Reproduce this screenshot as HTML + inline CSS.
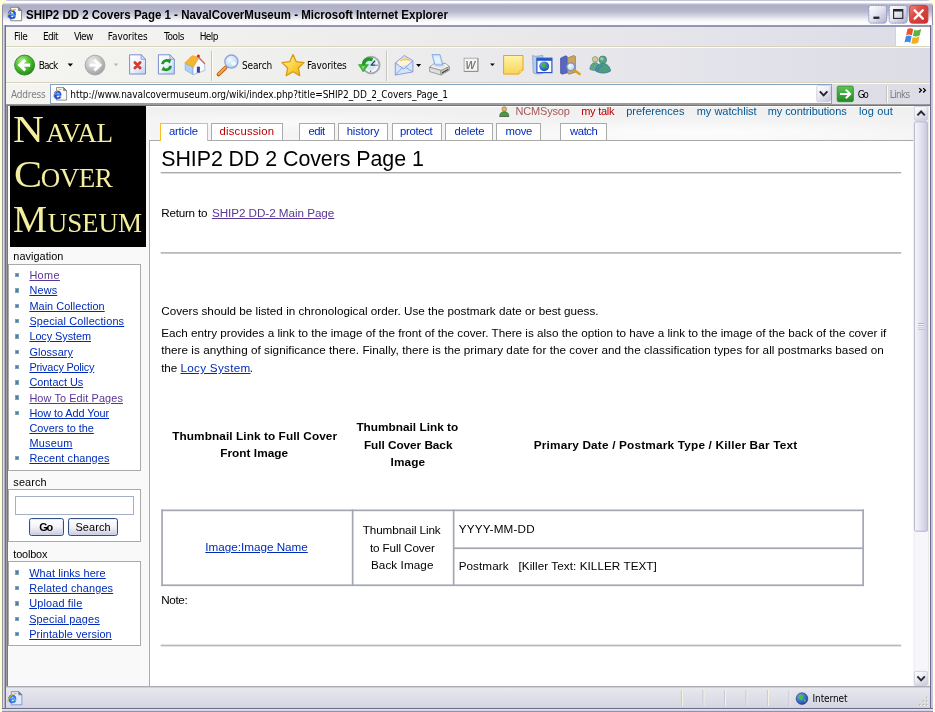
<!DOCTYPE html>
<html>
<head>
<meta charset="utf-8">
<title>SHIP2 DD 2 Covers Page 1 - NavalCoverMuseum</title>
<style>
*{box-sizing:border-box}
html,body{margin:0;padding:0}
body{width:935px;height:712px;overflow:hidden;position:relative;background:#ffffd8;font-family:"Liberation Sans",sans-serif;}
.abs{position:absolute}
.ui{font-family:"DejaVu Sans Condensed","DejaVu Sans","Liberation Sans",sans-serif;font-size:10px;color:#000;white-space:nowrap;line-height:12px}
/* window frame */
#frame{left:2px;top:0;width:931px;height:712px;border-radius:7px 7px 0 0;background:#c9c9e1;overflow:hidden}
#titlebar{left:0;top:0;width:931px;height:27px;background:linear-gradient(to bottom,#8f8fab 0,#fdfdff 1px,#fdfdff 2.5px,#b8b8ce 4.5px,#aeaec6 6px,#b6b6cd 11px,#cfcfde 15px,#ededf4 19px,#fcfcfe 22px,#fcfcfe 24.5px,#9a9ab6 25px,#9292b0 27px)}
#title{left:25px;top:7px;font-family:"Liberation Sans",sans-serif;font-weight:bold;font-size:11.7px;letter-spacing:-0.1px;line-height:14px;white-space:nowrap;color:#000}
.bl{left:0;top:25px;width:4px;height:684px;background:linear-gradient(to right,#8e8e94 0,#9a9aa4 0.9px,#dcdcee 1.2px,#d0d0e6 2.2px,#8a8aa6 2.8px,#70708c 3.1px,#70708c 4px)}
.br{left:928px;top:25px;width:3.5px;height:684px;background:linear-gradient(to right,#6c6c8a 0,#6c6c8a 0.9px,#c2c2e2 1.2px,#c8c8e6 2.6px,#9a9ab6 3.5px)}
.bb{left:0;top:708px;width:931px;height:4px;background:linear-gradient(to bottom,#6c6c8a 0,#6c6c8a 0.9px,#e6e6f4 1.2px,#d2d2e8 2.7px,#96969c 3.1px,#909096 4px)}
.tbtn{top:5px;width:18.5px;height:18.5px;border-radius:3px;border:1px solid #7c86c4;background:linear-gradient(135deg,#ffffff 0,#e9e9f3 35%,#b9b9d3 100%)}
/* bars */
#menubar{left:6px;top:27px;width:924px;height:20px;background:linear-gradient(to right,#f4f4f0 0,#f1f1ee 20%,#eaeaec 52%,#e2e2ea 80%,#dcdce6 100%);border-bottom:1px solid #d9d4c0}
#toolbar{left:6px;top:47px;width:924px;height:36px;background:linear-gradient(to right,#f4f4f0 0,#f1f1ee 20%,#eaeaec 52%,#e2e2ea 80%,#dcdce6 100%);border-top:1px solid #fbfbf8;border-bottom:1px solid #d9d4c0}
#addrbar{left:6px;top:83px;width:924px;height:21px;background:linear-gradient(to right,#f4f4f0 0,#f1f1ee 20%,#eaeaec 52%,#e2e2ea 80%,#dcdce6 100%);border-top:1px solid #fbfbf8}
.sep{width:1px;background:#c5c5bd;border-right:1px solid #fafaf6;box-sizing:content-box}
#status{left:6px;top:686px;width:924px;height:22px;background:linear-gradient(to bottom,#a2a2aa 0,#b4b4bc 1px,#d4d4dc 1.6px,#e9e9f0 2.6px,#e4e4ec 5px,#dedee8 13px,#d8d8e3 20px,#d2d2de 22px)}
/* page */
#view{left:6px;top:104px;width:924px;height:582px;background:#9b9b9b}
#view:before{content:"";position:absolute;left:1px;top:1px;right:0;bottom:0;background:#787870}
#page{left:2px;top:2px;width:906px;height:580px;background:#f9f9f9;overflow:hidden}
</style>
</head>
<body>
<div id="root" class="abs" style="left:0;top:0;width:935px;height:712px;will-change:transform">
<div id="frame" class="abs">
  <div id="titlebar" class="abs"></div>
  <div class="abs" style="left:0;top:5px;width:1px;height:21px;background:#8e8ea6"></div><div class="abs" style="left:930px;top:5px;width:1px;height:21px;background:#8e8ea6"></div><div class="abs bl"></div><div class="abs br"></div><div class="abs bb"></div>
  
</div>

<!-- MENUBAR -->
<div id="menubar" class="abs">
  <div class="abs" style="left:889px;top:0;width:35px;height:19px;background:#fff;border-left:1px solid #d9d4c0"></div>
</div>

<!-- TOOLBAR -->
<div id="toolbar" class="abs">
  <div class="abs sep" style="left:205px;top:3px;height:30px"></div>
  <div class="abs sep" style="left:380px;top:3px;height:30px"></div>
</div>

<!-- ADDRESS BAR -->
<div id="addrbar" class="abs">
  <div class="abs" style="left:44px;top:0;width:782px;height:20px;background:#fff;border:1px solid #86a0c2"></div>
  <div class="abs sep" style="left:880px;top:2px;height:17px"></div>
</div>

<!-- PAGE VIEW -->
<div id="view" class="abs">
  <div id="page" class="abs">
<div class="abs" style="left:0.00px;top:0.00px;width:906.00px;height:40.00px;background:radial-gradient(ellipse 260px 14px at 76% 66%,rgba(255,255,255,0.85),rgba(255,255,255,0) 100%),radial-gradient(ellipse 200px 12px at 30% 40%,rgba(255,255,255,0.6),rgba(255,255,255,0) 100%),linear-gradient(to bottom,#ffffff 0,#ffffff 1px,#f0f0f0 1.2px,#f2f2f2 40%,#f6f6f6 100%)"></div>
<div class="abs" style="left:2.00px;top:0.00px;width:136.00px;height:141.00px;background:#000"></div>
<span class="abs" style="left:4.88px;top:0px;font-family:'Liberation Serif',serif;font-size:27px;line-height:47px;letter-spacing:-0.312px;color:#f3eea0;white-space:pre"><span style="display:inline-block;width:33.02px;font-size:38px;letter-spacing:0;transform:scaleX(1.1231);transform-origin:0 0">N</span>AVAL</span>
<span class="abs" style="left:5.59px;top:45px;font-family:'Liberation Serif',serif;font-size:27px;line-height:47px;letter-spacing:-0.463px;color:#f3eea0;white-space:pre"><span style="display:inline-block;width:27.11px;font-size:38px;letter-spacing:0;transform:scaleX(1.1087);transform-origin:0 0">C</span>OVER</span>
<span class="abs" style="left:4.99px;top:90px;font-family:'Liberation Serif',serif;font-size:27px;line-height:47px;letter-spacing:-0.051px;color:#f3eea0;white-space:pre"><span style="display:inline-block;width:34.71px;font-size:38px;letter-spacing:0;transform:scaleX(1.0063);transform-origin:0 0">M</span>USEUM</span>
<span class="abs" style="left:5.30px;top:143.00px;font-family:'Liberation Sans',sans-serif;font-size:10.9px;line-height:14px;color:#000;letter-spacing:0.045px;white-space:pre;">navigation</span>
<div class="abs" style="left:0.30px;top:157.70px;width:133.00px;height:207.00px;background:#fff;border:1px solid #aaa"></div>
<a class="abs" style="left:21.40px;top:162.00px;font-family:'Liberation Sans',sans-serif;font-size:10.9px;line-height:14px;color:#5a3696;letter-spacing:0.369px;white-space:pre;text-decoration:underline;">Home</a>
<div class="abs" style="left:7.00px;top:166.80px;width:4.40px;height:4.60px;background:#4f7f9d;border:0.7px solid #7ea3ba"></div>
<a class="abs" style="left:21.40px;top:177.00px;font-family:'Liberation Sans',sans-serif;font-size:10.9px;line-height:14px;color:#002bb8;letter-spacing:0.171px;white-space:pre;text-decoration:underline;">News</a>
<div class="abs" style="left:7.00px;top:182.30px;width:4.40px;height:4.60px;background:#4f7f9d;border:0.7px solid #7ea3ba"></div>
<a class="abs" style="left:21.40px;top:193.00px;font-family:'Liberation Sans',sans-serif;font-size:10.9px;line-height:14px;color:#002bb8;letter-spacing:0.057px;white-space:pre;text-decoration:underline;">Main Collection</a>
<div class="abs" style="left:7.00px;top:197.60px;width:4.40px;height:4.60px;background:#4f7f9d;border:0.7px solid #7ea3ba"></div>
<a class="abs" style="left:21.40px;top:208.00px;font-family:'Liberation Sans',sans-serif;font-size:10.9px;line-height:14px;color:#002bb8;letter-spacing:0.146px;white-space:pre;text-decoration:underline;">Special Collections</a>
<div class="abs" style="left:7.00px;top:212.80px;width:4.40px;height:4.60px;background:#4f7f9d;border:0.7px solid #7ea3ba"></div>
<a class="abs" style="left:21.40px;top:223.00px;font-family:'Liberation Sans',sans-serif;font-size:10.9px;line-height:14px;color:#002bb8;letter-spacing:-0.067px;white-space:pre;text-decoration:underline;">Locy System</a>
<div class="abs" style="left:7.00px;top:228.10px;width:4.40px;height:4.60px;background:#4f7f9d;border:0.7px solid #7ea3ba"></div>
<a class="abs" style="left:21.40px;top:239.00px;font-family:'Liberation Sans',sans-serif;font-size:10.9px;line-height:14px;color:#002bb8;letter-spacing:0.083px;white-space:pre;text-decoration:underline;">Glossary</a>
<div class="abs" style="left:7.00px;top:243.60px;width:4.40px;height:4.60px;background:#4f7f9d;border:0.7px solid #7ea3ba"></div>
<a class="abs" style="left:21.40px;top:254.00px;font-family:'Liberation Sans',sans-serif;font-size:10.9px;line-height:14px;color:#002bb8;letter-spacing:-0.210px;white-space:pre;text-decoration:underline;">Privacy Policy</a>
<div class="abs" style="left:7.00px;top:258.60px;width:4.40px;height:4.60px;background:#4f7f9d;border:0.7px solid #7ea3ba"></div>
<a class="abs" style="left:21.40px;top:269.00px;font-family:'Liberation Sans',sans-serif;font-size:10.9px;line-height:14px;color:#002bb8;letter-spacing:-0.003px;white-space:pre;text-decoration:underline;">Contact Us</a>
<div class="abs" style="left:7.00px;top:274.00px;width:4.40px;height:4.60px;background:#4f7f9d;border:0.7px solid #7ea3ba"></div>
<a class="abs" style="left:21.40px;top:285.00px;font-family:'Liberation Sans',sans-serif;font-size:10.9px;line-height:14px;color:#5a3696;letter-spacing:0.102px;white-space:pre;text-decoration:underline;">How To Edit Pages</a>
<div class="abs" style="left:7.00px;top:289.30px;width:4.40px;height:4.60px;background:#4f7f9d;border:0.7px solid #7ea3ba"></div>
<a class="abs" style="left:21.40px;top:300.00px;font-family:'Liberation Sans',sans-serif;font-size:10.9px;line-height:14px;color:#002bb8;letter-spacing:-0.057px;white-space:pre;text-decoration:underline;">How to Add Your</a>
<div class="abs" style="left:7.00px;top:304.80px;width:4.40px;height:4.60px;background:#4f7f9d;border:0.7px solid #7ea3ba"></div>
<a class="abs" style="left:21.40px;top:315.00px;font-family:'Liberation Sans',sans-serif;font-size:10.9px;line-height:14px;color:#002bb8;letter-spacing:-0.026px;white-space:pre;text-decoration:underline;">Covers to the</a>
<a class="abs" style="left:21.40px;top:330.00px;font-family:'Liberation Sans',sans-serif;font-size:10.9px;line-height:14px;color:#002bb8;letter-spacing:0.222px;white-space:pre;text-decoration:underline;">Museum</a>
<a class="abs" style="left:21.40px;top:345.00px;font-family:'Liberation Sans',sans-serif;font-size:10.9px;line-height:14px;color:#002bb8;letter-spacing:0.095px;white-space:pre;text-decoration:underline;">Recent changes</a>
<div class="abs" style="left:7.00px;top:349.90px;width:4.40px;height:4.60px;background:#4f7f9d;border:0.7px solid #7ea3ba"></div>
<span class="abs" style="left:5.30px;top:369.00px;font-family:'Liberation Sans',sans-serif;font-size:10.9px;line-height:14px;color:#000;letter-spacing:0.134px;white-space:pre;">search</span>
<div class="abs" style="left:0.30px;top:383.40px;width:133.00px;height:52.50px;background:#fff;border:1px solid #aaa"></div>
<div class="abs" style="left:7.00px;top:390.00px;width:119.00px;height:19.20px;background:#fff;border:1px solid #a3b0c2"></div>
<div class="abs" style="left:21.00px;top:412.20px;width:34.60px;height:17.60px;border:1px solid #2f4f86;border-radius:2.5px;background:linear-gradient(to bottom,#ffffff 0,#f5f5f9 45%,#dcdce8 80%,#c6c6da 100%);box-shadow:inset 0 0 0 0.6px #cfdcf4"></div>
<div class="abs" style="left:60.00px;top:412.20px;width:50.20px;height:17.60px;border:1px solid #2f4f86;border-radius:2.5px;background:linear-gradient(to bottom,#ffffff 0,#f5f5f9 45%,#dcdce8 80%,#c6c6da 100%);box-shadow:inset 0 0 0 0.6px #cfdcf4"></div>
<span class="abs" style="left:31.20px;top:414.00px;font-family:'Liberation Sans',sans-serif;font-size:10.9px;line-height:14px;color:#000;letter-spacing:-1.171px;white-space:pre;font-weight:bold;">Go</span>
<span class="abs" style="left:67.40px;top:414.00px;font-family:'Liberation Sans',sans-serif;font-size:10.9px;line-height:14px;color:#000;letter-spacing:0.130px;white-space:pre;">Search</span>
<span class="abs" style="left:5.30px;top:441.00px;font-family:'Liberation Sans',sans-serif;font-size:10.9px;line-height:14px;color:#000;letter-spacing:-0.162px;white-space:pre;">toolbox</span>
<div class="abs" style="left:0.30px;top:455.40px;width:133.00px;height:84.30px;background:#fff;border:1px solid #aaa"></div>
<a class="abs" style="left:21.20px;top:460.00px;font-family:'Liberation Sans',sans-serif;font-size:10.9px;line-height:14px;color:#002bb8;letter-spacing:0.100px;white-space:pre;text-decoration:underline;">What links here</a>
<div class="abs" style="left:7.00px;top:464.40px;width:4.40px;height:4.60px;background:#4f7f9d;border:0.7px solid #7ea3ba"></div>
<a class="abs" style="left:21.20px;top:475.00px;font-family:'Liberation Sans',sans-serif;font-size:10.9px;line-height:14px;color:#002bb8;letter-spacing:0.151px;white-space:pre;text-decoration:underline;">Related changes</a>
<div class="abs" style="left:7.00px;top:479.80px;width:4.40px;height:4.60px;background:#4f7f9d;border:0.7px solid #7ea3ba"></div>
<a class="abs" style="left:21.20px;top:490.00px;font-family:'Liberation Sans',sans-serif;font-size:10.9px;line-height:14px;color:#002bb8;letter-spacing:0.160px;white-space:pre;text-decoration:underline;">Upload file</a>
<div class="abs" style="left:7.00px;top:495.20px;width:4.40px;height:4.60px;background:#4f7f9d;border:0.7px solid #7ea3ba"></div>
<a class="abs" style="left:21.20px;top:506.00px;font-family:'Liberation Sans',sans-serif;font-size:10.9px;line-height:14px;color:#002bb8;letter-spacing:0.169px;white-space:pre;text-decoration:underline;">Special pages</a>
<div class="abs" style="left:7.00px;top:510.50px;width:4.40px;height:4.60px;background:#4f7f9d;border:0.7px solid #7ea3ba"></div>
<a class="abs" style="left:21.20px;top:521.00px;font-family:'Liberation Sans',sans-serif;font-size:10.9px;line-height:14px;color:#002bb8;letter-spacing:0.084px;white-space:pre;text-decoration:underline;">Printable version</a>
<div class="abs" style="left:7.00px;top:525.80px;width:4.40px;height:4.60px;background:#4f7f9d;border:0.7px solid #7ea3ba"></div>
<div class="abs" style="left:140.50px;top:34.00px;width:770.00px;height:560.00px;background:#fff;border:1px solid #aaa"></div>
<svg class="abs" style="left:491.40px;top:-0.50px" width="10.5" height="11.5" viewBox="0 0 21 23"><circle cx="10.5" cy="6" r="4.6" fill="#e8b868" stroke="#8a6a30" stroke-width="1.2"/><path d="M1.5 21 C1.5 13 6 11.5 10.5 11.5 S19.5 13 19.5 21 Z" fill="#4f9a3f" stroke="#2f6a2a" stroke-width="1.4"/><path d="M1 21.5h19" stroke="#555" stroke-width="1.6"/></svg>
<span class="abs" style="left:507.50px;top:-2.00px;font-family:'Liberation Sans',sans-serif;font-size:11px;line-height:14px;color:#a55858;letter-spacing:-0.186px;white-space:pre;">NCMSysop</span>
<span class="abs" style="left:573.20px;top:-2.00px;font-family:'Liberation Sans',sans-serif;font-size:11px;line-height:14px;color:#ba0000;letter-spacing:-0.256px;white-space:pre;">my talk</span>
<span class="abs" style="left:618.20px;top:-2.00px;font-family:'Liberation Sans',sans-serif;font-size:11px;line-height:14px;color:#005896;letter-spacing:0.011px;white-space:pre;">preferences</span>
<span class="abs" style="left:688.70px;top:-2.00px;font-family:'Liberation Sans',sans-serif;font-size:11px;line-height:14px;color:#005896;letter-spacing:0.005px;white-space:pre;">my watchlist</span>
<span class="abs" style="left:759.70px;top:-2.00px;font-family:'Liberation Sans',sans-serif;font-size:11px;line-height:14px;color:#005896;letter-spacing:-0.073px;white-space:pre;">my contributions</span>
<span class="abs" style="left:851.00px;top:-2.00px;font-family:'Liberation Sans',sans-serif;font-size:11px;line-height:14px;color:#005896;letter-spacing:0.122px;white-space:pre;">log out</span>
<div class="abs" style="left:151.70px;top:17.10px;width:48.30px;height:18.20px;background:#fff;border:1px solid #fabd23;border-bottom:none"></div>
<span class="abs" style="left:160.90px;top:18.00px;font-family:'Liberation Sans',sans-serif;font-size:11.3px;line-height:15px;color:#002bb8;letter-spacing:-0.159px;white-space:pre;">article</span>
<div class="abs" style="left:202.60px;top:17.40px;width:72.30px;height:16.80px;background:#fff;border:1px solid #aaa;border-bottom:none"></div>
<span class="abs" style="left:211.60px;top:18.00px;font-family:'Liberation Sans',sans-serif;font-size:11.3px;line-height:15px;color:#ba0000;letter-spacing:0.182px;white-space:pre;">discussion</span>
<div class="abs" style="left:291.40px;top:17.40px;width:35.20px;height:16.80px;background:#fff;border:1px solid #aaa;border-bottom:none"></div>
<span class="abs" style="left:300.60px;top:18.00px;font-family:'Liberation Sans',sans-serif;font-size:11.3px;line-height:15px;color:#002bb8;letter-spacing:-0.525px;white-space:pre;">edit</span>
<div class="abs" style="left:330.00px;top:17.40px;width:50.40px;height:16.80px;background:#fff;border:1px solid #aaa;border-bottom:none"></div>
<span class="abs" style="left:338.70px;top:18.00px;font-family:'Liberation Sans',sans-serif;font-size:11.3px;line-height:15px;color:#002bb8;letter-spacing:-0.104px;white-space:pre;">history</span>
<div class="abs" style="left:383.90px;top:17.40px;width:49.80px;height:16.80px;background:#fff;border:1px solid #aaa;border-bottom:none"></div>
<span class="abs" style="left:392.00px;top:18.00px;font-family:'Liberation Sans',sans-serif;font-size:11.3px;line-height:15px;color:#002bb8;letter-spacing:-0.300px;white-space:pre;">protect</span>
<div class="abs" style="left:436.90px;top:17.40px;width:48.10px;height:16.80px;background:#fff;border:1px solid #aaa;border-bottom:none"></div>
<span class="abs" style="left:446.50px;top:18.00px;font-family:'Liberation Sans',sans-serif;font-size:11.3px;line-height:15px;color:#002bb8;letter-spacing:-0.139px;white-space:pre;">delete</span>
<div class="abs" style="left:488.20px;top:17.40px;width:44.60px;height:16.80px;background:#fff;border:1px solid #aaa;border-bottom:none"></div>
<span class="abs" style="left:497.50px;top:18.00px;font-family:'Liberation Sans',sans-serif;font-size:11.3px;line-height:15px;color:#002bb8;letter-spacing:-0.247px;white-space:pre;">move</span>
<div class="abs" style="left:552.40px;top:17.40px;width:46.20px;height:16.80px;background:#fff;border:1px solid #aaa;border-bottom:none"></div>
<span class="abs" style="left:562.00px;top:18.00px;font-family:'Liberation Sans',sans-serif;font-size:11.3px;line-height:15px;color:#002bb8;letter-spacing:-0.407px;white-space:pre;">watch</span>
<span class="abs" style="left:153.20px;top:40.00px;font-family:'Liberation Sans',sans-serif;font-size:21.4px;line-height:27px;color:#000;letter-spacing:-0.058px;white-space:pre;">SHIP2 DD 2 Covers Page 1</span>
<svg class="abs" style="left:0;top:0" width="906" height="580" fill="#aaaaaa"><rect x="152.70" y="66.00" width="740.50" height="1.40"/></svg>
<span class="abs" style="left:153.20px;top:99.00px;font-family:'Liberation Sans',sans-serif;font-size:11.7px;line-height:15px;color:#000;letter-spacing:-0.234px;white-space:pre;">Return to</span>
<a class="abs" style="left:203.90px;top:99.00px;font-family:'Liberation Sans',sans-serif;font-size:11.7px;line-height:15px;color:#5a3696;letter-spacing:-0.054px;white-space:pre;text-decoration:underline;">SHIP2 DD-2 Main Page</a>
<svg class="abs" style="left:0;top:0" width="906" height="580" fill="#bcbaba"><rect x="152.70" y="146.00" width="740.50" height="1.80"/></svg>
<span class="abs" style="left:153.20px;top:197.00px;font-family:'Liberation Sans',sans-serif;font-size:11.7px;line-height:15px;color:#000;letter-spacing:0.009px;white-space:pre;">Covers should be listed in chronological order. Use the postmark date or best guess.</span>
<span class="abs" style="left:153.20px;top:219.00px;font-family:'Liberation Sans',sans-serif;font-size:11.7px;line-height:15px;color:#000;letter-spacing:-0.002px;white-space:pre;">Each entry provides a link to the image of the front of the cover. There is also the option to have a link to the image of the back of the cover if</span>
<span class="abs" style="left:153.20px;top:236.00px;font-family:'Liberation Sans',sans-serif;font-size:11.7px;line-height:15px;color:#000;letter-spacing:0.043px;white-space:pre;">there is anything of significance there. Finally, there is the primary date for the cover and the classification types for all postmarks based on</span>
<span class="abs" style="left:153.20px;top:254.00px;font-family:'Liberation Sans',sans-serif;font-size:11.7px;line-height:15px;color:#000;letter-spacing:-0.074px;white-space:pre;">the</span>
<a class="abs" style="left:172.50px;top:254.00px;font-family:'Liberation Sans',sans-serif;font-size:11.7px;line-height:15px;color:#002bb8;letter-spacing:0.284px;white-space:pre;text-decoration:underline;">Locy System</a>
<span class="abs" style="left:241.70px;top:254.00px;font-family:'Liberation Sans',sans-serif;font-size:11.7px;line-height:15px;color:#000;white-space:pre;">.</span>
<span class="abs" style="left:164.20px;top:323.00px;font-family:'Liberation Sans',sans-serif;font-size:11.8px;line-height:15px;color:#000;letter-spacing:0.087px;white-space:pre;font-weight:bold;">Thumbnail Link to Full Cover</span>
<span class="abs" style="left:212.20px;top:340.00px;font-family:'Liberation Sans',sans-serif;font-size:11.8px;line-height:15px;color:#000;letter-spacing:0.045px;white-space:pre;font-weight:bold;">Front Image</span>
<span class="abs" style="left:348.40px;top:314.00px;font-family:'Liberation Sans',sans-serif;font-size:11.8px;line-height:15px;color:#000;letter-spacing:0.014px;white-space:pre;font-weight:bold;">Thumbnail Link to</span>
<span class="abs" style="left:355.90px;top:332.00px;font-family:'Liberation Sans',sans-serif;font-size:11.8px;line-height:15px;color:#000;letter-spacing:-0.043px;white-space:pre;font-weight:bold;">Full Cover Back</span>
<span class="abs" style="left:382.60px;top:349.00px;font-family:'Liberation Sans',sans-serif;font-size:11.8px;line-height:15px;color:#000;letter-spacing:0.092px;white-space:pre;font-weight:bold;">Image</span>
<span class="abs" style="left:525.70px;top:332.00px;font-family:'Liberation Sans',sans-serif;font-size:11.8px;line-height:15px;color:#000;letter-spacing:0.184px;white-space:pre;font-weight:bold;">Primary Date / Postmark Type / Killer Bar Text</span>
<div class="abs" style="left:153.20px;top:403.50px;width:702.60px;height:76.50px;background:#fff"></div>
<svg class="abs" style="left:0;top:0" width="906" height="580" fill="#a3a7b3"><rect x="153.20" y="403.50" width="702.80" height="1.70"/><rect x="153.20" y="478.40" width="702.80" height="1.70"/><rect x="153.20" y="403.50" width="1.70" height="76.60"/><rect x="854.30" y="403.50" width="1.70" height="76.60"/><rect x="343.80" y="403.50" width="1.70" height="76.50"/><rect x="444.80" y="403.50" width="1.70" height="76.50"/><rect x="445.00" y="441.40" width="410.00" height="1.70"/></svg>
<a class="abs" style="left:197.30px;top:433.00px;font-family:'Liberation Sans',sans-serif;font-size:11.7px;line-height:15px;color:#002bb8;letter-spacing:-0.009px;white-space:pre;text-decoration:underline;">Image:Image Name</a>
<span class="abs" style="left:354.80px;top:416.00px;font-family:'Liberation Sans',sans-serif;font-size:11.7px;line-height:15px;color:#000;letter-spacing:-0.109px;white-space:pre;">Thumbnail Link</span>
<span class="abs" style="left:361.90px;top:434.00px;font-family:'Liberation Sans',sans-serif;font-size:11.7px;line-height:15px;color:#000;letter-spacing:-0.105px;white-space:pre;">to Full Cover</span>
<span class="abs" style="left:363.00px;top:451.00px;font-family:'Liberation Sans',sans-serif;font-size:11.7px;line-height:15px;color:#000;letter-spacing:0.076px;white-space:pre;">Back Image</span>
<span class="abs" style="left:450.70px;top:415.00px;font-family:'Liberation Sans',sans-serif;font-size:11.7px;line-height:15px;color:#000;letter-spacing:0.188px;white-space:pre;">YYYY-MM-DD</span>
<span class="abs" style="left:450.70px;top:452.00px;font-family:'Liberation Sans',sans-serif;font-size:11.7px;line-height:15px;color:#000;letter-spacing:0.067px;white-space:pre;">Postmark   [Killer Text: KILLER TEXT]</span>
<span class="abs" style="left:153.20px;top:486.00px;font-family:'Liberation Sans',sans-serif;font-size:11.7px;line-height:15px;color:#000;letter-spacing:-0.347px;white-space:pre;">Note:</span>
<svg class="abs" style="left:0;top:0" width="906" height="580" fill="#bcbaba"><rect x="152.70" y="538.60" width="740.50" height="1.80"/></svg>
  </div>
</div>

<!-- STATUS BAR -->
<div id="status" class="abs">
</div>
<svg class="abs" style="left:0;top:0" width="935" height="712" viewBox="0 0 935 712"><defs>
<radialGradient id="gGreen" cx="0.38" cy="0.3" r="0.75"><stop offset="0" stop-color="#b4f08c"/><stop offset="0.45" stop-color="#56c238"/><stop offset="1" stop-color="#1f8517"/></radialGradient>
<radialGradient id="gGray" cx="0.38" cy="0.3" r="0.75"><stop offset="0" stop-color="#ececec"/><stop offset="0.5" stop-color="#c6c6c6"/><stop offset="1" stop-color="#9c9c9c"/></radialGradient>
<linearGradient id="gPage" x1="0" y1="0" x2="1" y2="1"><stop offset="0" stop-color="#ffffff"/><stop offset="0.5" stop-color="#eef4fd"/><stop offset="1" stop-color="#b9d2f4"/></linearGradient>
<radialGradient id="gLens" cx="0.4" cy="0.35" r="0.7"><stop offset="0" stop-color="#f4fbff"/><stop offset="0.6" stop-color="#c4e4fb"/><stop offset="1" stop-color="#9ccdf4"/></radialGradient>
<linearGradient id="gStar" x1="0" y1="0" x2="1" y2="1"><stop offset="0" stop-color="#fff6b0"/><stop offset="0.5" stop-color="#fbd545"/><stop offset="1" stop-color="#f0a818"/></linearGradient>
<linearGradient id="gNote" x1="0" y1="0" x2="0" y2="1"><stop offset="0" stop-color="#fff4a8"/><stop offset="1" stop-color="#f7d558"/></linearGradient>
<linearGradient id="gBtn" x1="0" y1="0" x2="1" y2="1"><stop offset="0" stop-color="#ffffff"/><stop offset="0.45" stop-color="#e6e6f1"/><stop offset="1" stop-color="#aeaecc"/></linearGradient>
<linearGradient id="gClose" x1="0" y1="0" x2="1" y2="1"><stop offset="0" stop-color="#ee8a7a"/><stop offset="0.4" stop-color="#da4a42"/><stop offset="1" stop-color="#c62e2e"/></linearGradient>
<linearGradient id="gGo" x1="0" y1="0" x2="0" y2="1"><stop offset="0" stop-color="#5fc456"/><stop offset="1" stop-color="#1e8a22"/></linearGradient>
<linearGradient id="gSb" x1="0" y1="0" x2="1" y2="0"><stop offset="0" stop-color="#f6f6fb"/><stop offset="0.5" stop-color="#e2e2ee"/><stop offset="1" stop-color="#c6c6dc"/></linearGradient>
<linearGradient id="gSbBtn" x1="0" y1="0" x2="0.6" y2="1"><stop offset="0" stop-color="#ffffff"/><stop offset="0.5" stop-color="#ededf5"/><stop offset="1" stop-color="#cfcfe0"/></linearGradient>
<radialGradient id="gGlobe" cx="0.35" cy="0.3" r="0.8"><stop offset="0" stop-color="#6aa8f0"/><stop offset="1" stop-color="#1a3ea8"/></radialGradient>
</defs>
<g transform="translate(7.3,6.9)"><g transform="scale(1.02)"><path d="M3.4 0.4H10.8L14 3.6V13.6H3.4Z" fill="#fbfbf4" stroke="#6f6f6f" stroke-width="0.8"/><path d="M10.8 0.4V3.6H14Z" fill="#8c8c8c" stroke="#555" stroke-width="0.5"/><text x="0.2" y="12" font-family="'Liberation Sans',sans-serif" font-weight="bold" font-size="15.5" fill="#1f4fd6" stroke="#1f4fd6" stroke-width="0.5">e</text><path d="M1.8 7.2H7.2" stroke="#58a8f8" stroke-width="1.2"/><path d="M-0.2 10.6C0.6 6 4.6 2.4 8.6 2.2" fill="none" stroke="#e8b428" stroke-width="1"/></g></g>
<rect x="868.8" y="5.4" width="17.8" height="17.8" rx="2.6" fill="url(#gBtn)" stroke="#7a86c6" stroke-width="0.9" stroke-dasharray="1.1 0.5"/>
<rect x="889.3" y="5.4" width="17.8" height="17.8" rx="2.6" fill="url(#gBtn)" stroke="#7a86c6" stroke-width="0.9" stroke-dasharray="1.1 0.5"/>
<rect x="873.4" y="16.6" width="6" height="2.3" fill="#22222c"/>
<rect x="893.6" y="9.6" width="9.2" height="8.8" fill="none" stroke="#22222c" stroke-width="1.1"/><rect x="893.6" y="9.3" width="9.2" height="2.2" fill="#22222c"/>
<rect x="909.6" y="5.4" width="18.3" height="17.8" rx="2.8" fill="url(#gClose)" stroke="#d23838" stroke-width="0.9"/>
<path d="M914.6 10.2L922.8 18.6M922.8 10.2L914.6 18.6" stroke="#fff" stroke-width="2.3" stroke-linecap="round"/>
<g transform="translate(903.6,27.2) scale(1.14)"><path d="M3.4 1.6C5.2 0.6 7 0.8 8.4 1.8L7.2 7.2C5.8 6.2 4 6 2.2 7Z" fill="#e8542c"/><path d="M9.4 2.2C11.2 3.2 13 3 15.4 1.6L14.2 7C12 8.4 10 8.4 8.2 7.6Z" fill="#5cb244"/><path d="M2 8C3.8 7 5.6 7.2 7 8.2L5.8 13.6C4.4 12.6 2.6 12.4 0.8 13.4Z" fill="#3a8ae8"/><path d="M8 8.6C9.8 9.6 11.8 9.4 14 8L12.8 13.4C10.6 14.8 8.6 14.8 6.8 14Z" fill="#f0b020"/></g>
<g transform="translate(24.6,65.1)"><circle r="10" fill="url(#gGreen)" stroke="#2a8a22" stroke-width="0.9"/><path d="M5.6 0H-3.6M0.7 -5.3L-4.9 0L0.7 5.3" fill="none" stroke="#fff" stroke-width="3.1" stroke-linejoin="miter" stroke-linecap="butt"/></g>
<path d="M67.6 63.4h5.4l-2.7 3z" fill="#000"/>
<g transform="translate(95,65.1)"><circle r="9.9" fill="url(#gGray)" stroke="#a4a4a4" stroke-width="0.9"/><path d="M-5.6 0H3.6M-0.7 -5.3L4.9 0L-0.7 5.3" fill="none" stroke="#fcfcfc" stroke-width="3.1" stroke-linejoin="miter" stroke-linecap="butt"/></g>
<path d="M113.6 63.6h4.8l-2.4 2.6z" fill="#b9b9b4"/>
<g transform="translate(129.1,54.3)"><path d="M0.5 0.5H12L16.4 4.9V19.7H0.5Z" fill="url(#gPage)" stroke="#6f82c8" stroke-width="0.9"/><path d="M12 0.5V4.9H16.4Z" fill="#dbe7fb" stroke="#6f82c8" stroke-width="0.7"/><path d="M5.8 8.2L11 13.6M11 8.2L5.8 13.6" stroke="#d63a34" stroke-width="2.9" stroke-linecap="round"/></g>
<g transform="translate(157.9,54.3)"><path d="M0.5 0.5H12L16.4 4.9V19.7H0.5Z" fill="url(#gPage)" stroke="#6f82c8" stroke-width="0.9"/><path d="M12 0.5V4.9H16.4Z" fill="#dbe7fb" stroke="#6f82c8" stroke-width="0.7"/><path d="M4.6 9.8A4.1 4.1 0 0 1 11.6 7.4" fill="none" stroke="#1f962a" stroke-width="2.7"/><path d="M9.4 4.6L13.6 5.2L11.6 9.4Z" fill="#239a2a"/><path d="M12.6 11.6A4.1 4.1 0 0 1 5.4 14" fill="none" stroke="#1f962a" stroke-width="2.7"/><path d="M7.6 16.8L3.4 16L5.6 12Z" fill="#239a2a"/></g>
<g transform="translate(184.6,54.3)"><path d="M0.6 9L8.4 12.6V20.3L0.6 15.8Z" fill="#a9d2f3" stroke="#7f9fd8" stroke-width="0.6"/><path d="M8.4 12.6L14 4.2L20.1 9.6V16.3L8.4 20.3Z" fill="#f7f9fd" stroke="#8f9ad8" stroke-width="0.6"/><path d="M0.2 8.6L7.4 1.4L14 2.9L8.7 12.9Z" fill="#f6b530" stroke="#e89a18" stroke-width="0.6"/><path d="M14 2.9L20.4 9.6" stroke="#d85a30" stroke-width="1.2"/><rect x="12.3" y="12.4" width="3" height="6" fill="#35449a"/><circle cx="13.8" cy="1.8" r="1.5" fill="#d8262c"/></g>
<path d="M225.6 67.6L218.6 74.4" stroke="#b04a28" stroke-width="3.8" stroke-linecap="round"/><path d="M225.4 67.6L218.8 74.1" stroke="#f4ac22" stroke-width="2.4" stroke-linecap="round"/>
<circle cx="231.4" cy="61.6" r="6.6" fill="url(#gLens)" stroke="#9a9fd6" stroke-width="1.3"/><ellipse cx="233.6" cy="63.6" rx="2.4" ry="2" fill="#fff" opacity="0.85"/>
<polygon points="293.00,54.60 296.29,61.67 304.03,62.62 298.33,67.93 299.82,75.58 293.00,71.80 286.18,75.58 287.67,67.93 281.97,62.62 289.71,61.67" fill="url(#gStar)" stroke="#d99a10" stroke-width="1.3" stroke-linejoin="round"/>
<circle cx="371.1" cy="65" r="8.4" fill="#cfeaf9" stroke="#a6a6ae" stroke-width="1.9"/><circle cx="371.1" cy="65" r="6.3" fill="none" stroke="#fff" stroke-width="1.3" opacity="0.9"/><path d="M371.1 65.2L374.8 61M371.1 65.2H375" stroke="#3c3c3c" stroke-width="1.2" stroke-linecap="round"/><circle cx="377" cy="65.3" r="0.8" fill="#e43a20"/><circle cx="370.6" cy="71.3" r="0.8" fill="#e43a20"/><path d="M372.6 59.6C367 57.6 363.4 60.8 363.6 65.4" fill="none" stroke="#1f9a22" stroke-width="3.5"/><path d="M358.4 64.6H368.6L363.2 72Z" fill="#3fb431" stroke="#1f9a22" stroke-width="0.5" stroke-linejoin="round"/><path d="M361.6 66L364.8 66L363.2 70Z" fill="#7fdc62"/>
<g transform="translate(394.3,54.7)"><path d="M1 8.2L10 0.8L18.6 6V17.2L1 20.4Z" fill="#cfe6fa" stroke="#8a90da" stroke-width="0.9" stroke-linejoin="round"/><path d="M3.4 7.4C6 3.6 12 2.6 16 5.2L15.6 9.6L4 11.6Z" fill="#fdf6d8"/><path d="M6 5.2C9 3 13 3 15.6 4.8L15.4 6.6C12 5 9 5.4 6 6.8Z" fill="#f6c868"/><path d="M1 8.2L9.6 14.4L18.6 6" fill="none" stroke="#8a90da" stroke-width="0.9"/><path d="M1 20.4L8 13.2M18.6 17.2L11.4 12.8" stroke="#8a90da" stroke-width="0.8"/></g>
<path d="M416.1 64.1h5l-2.5 2.9z" fill="#000"/>
<g transform="translate(428.6,54)"><path d="M1 13.2L5.6 9.4H16.8L20.8 12.6L12.4 16.4Z" fill="#f7f7f7" stroke="#8c8c8c" stroke-width="0.8" stroke-linejoin="round"/><path d="M1 13.2L12.4 16.4V21L1 17.6Z" fill="#dedede" stroke="#8c8c8c" stroke-width="0.8" stroke-linejoin="round"/><path d="M12.4 16.4L20.8 12.6V16.2L12.4 21Z" fill="#c8c8c8" stroke="#8c8c8c" stroke-width="0.8" stroke-linejoin="round"/><path d="M13.4 18.2L19.8 14.8V15.9L13.4 19.5Z" fill="#3c3c3c"/><path d="M6.4 10.6H15.6L17.6 12.4L12.2 14.6L4.2 12.4Z" fill="#e2e2e2"/><path d="M3.4 0.6H11.4L14.4 11H6.4Z" fill="#bfe0fc" stroke="#7f9ce0" stroke-width="0.8" stroke-linejoin="round"/><path d="M5 2.2H10.6L12.6 9.4H7Z" fill="#e2f2ff"/><circle cx="18.6" cy="13.9" r="0.6" fill="#30c030"/></g>
<g transform="translate(463.7,57.8)"><rect x="0.4" y="0.4" width="13.8" height="13.2" fill="#f4f4f2" stroke="#a9a9a9" stroke-width="0.9"/><path d="M0.4 13.6H14.2V0.4" fill="none" stroke="#8a8a8a" stroke-width="0.9"/><text x="2.5" y="11.6" font-family="'Liberation Sans',sans-serif" font-style="italic" font-weight="bold" font-size="10.5" fill="#ffffff">W</text><text x="1.7" y="10.9" font-family="'Liberation Sans',sans-serif" font-style="italic" font-weight="bold" font-size="10.5" fill="#7c7c7c">W</text></g>
<path d="M490 63.4h4.8l-2.4 2.7z" fill="#000"/>
<g transform="translate(503,54.9)"><path d="M0.6 0.6H20V15.4L15.6 19.2H0.6Z" fill="url(#gNote)" stroke="#e6a520" stroke-width="1"/><path d="M20 15.2C18 15 16.4 15.6 15.6 19.2" fill="#fdeea0" stroke="#e0a020" stroke-width="0.7"/></g>
<g transform="translate(531,54.7)"><path d="M1.6 0.8C4 2.4 8 1.2 11.8 0.6V18.6C8 19.6 4 19.4 2.2 18Z" fill="#b9cde8" stroke="#8a9ccc" stroke-width="0.8"/><rect x="5.9" y="3.5" width="15" height="14.4" fill="#fff" stroke="#2457c6" stroke-width="1.2"/><rect x="5.9" y="3.5" width="15" height="2.6" fill="#2457c6"/><circle cx="13.2" cy="11.6" r="4.9" fill="url(#gGlobe)"/><path d="M10.4 9.4C11.6 8 13.6 8 14.4 9C13.6 10.6 14.8 11.4 13.4 13C12.2 13.2 11.8 11.6 10.4 11Z M15.4 11.4C16.4 11.4 17 12.4 16.4 13.8C15.6 14.2 15 13 15.4 11.4Z" fill="#3fb848"/></g>
<g transform="translate(560,55)"><path d="M0.6 3.2L5.6 0.8L7.2 1.6V17.8L2 19.2L0.6 18.2Z" fill="#5a66c4" stroke="#3a4696" stroke-width="0.7"/><path d="M7.6 3L13.6 0.6L15.4 1.4V17.2L9.2 19.2L7.6 18.2Z" fill="#c9a760" stroke="#8c7440" stroke-width="0.7"/><path d="M14 15L19.6 19" stroke="#d8a020" stroke-width="2.6" stroke-linecap="round"/><circle cx="10.8" cy="11.8" r="4" fill="url(#gLens)" stroke="#8a8ab0" stroke-width="1.2"/></g>
<g transform="translate(589.2,56)"><path d="M0.6 13.2C1 8.4 3.6 6.6 6 6.6C8.4 6.6 10.4 8.6 10.6 13.2C7.4 15 3.6 15 0.6 13.2Z" fill="#5ca886" stroke="#3f7aa6" stroke-width="0.6"/><circle cx="5.9" cy="3.4" r="2.8" fill="#d9c890" stroke="#6a9a6a" stroke-width="0.7"/><path d="M6.4 15C7 9.6 10 7.4 13.6 7.4C17.4 7.4 20.6 10 21.4 15C17 17.8 11 17.8 6.4 15Z" fill="#4a9e78" stroke="#2f6aa8" stroke-width="0.7"/><path d="M8.4 14.6C10 11 12 9.6 13.6 9.4" fill="none" stroke="#4a76c8" stroke-width="1.4"/><circle cx="13.6" cy="3.8" r="3.8" fill="#5aa486" stroke="#3a7a6a" stroke-width="0.7"/><circle cx="12.6" cy="2.8" r="1.5" fill="#9fd0b4"/></g>
<g transform="translate(53.3,87.2)"><g transform="scale(0.95)"><path d="M3.4 0.4H10.8L14 3.6V13.6H3.4Z" fill="#fbfbf4" stroke="#6f6f6f" stroke-width="0.8"/><path d="M10.8 0.4V3.6H14Z" fill="#8c8c8c" stroke="#555" stroke-width="0.5"/><text x="0.2" y="12" font-family="'Liberation Sans',sans-serif" font-weight="bold" font-size="15.5" fill="#1f4fd6" stroke="#1f4fd6" stroke-width="0.5">e</text><path d="M1.8 7.2H7.2" stroke="#58a8f8" stroke-width="1.2"/><path d="M-0.2 10.6C0.6 6 4.6 2.4 8.6 2.2" fill="none" stroke="#e8b428" stroke-width="1"/></g></g>
<rect x="816.8" y="85.4" width="13.6" height="16.4" rx="1.6" fill="url(#gSbBtn)" stroke="#c6c6dc" stroke-width="0.8"/><path d="M819.8 91.4L823.6 95.4L827.4 91.4" fill="none" stroke="#22222a" stroke-width="1.9"/>
<rect x="837.2" y="86.1" width="16.2" height="15.6" rx="1.6" fill="url(#gGo)" stroke="#2a8a2a" stroke-width="0.8"/><path d="M840 93.9H849.4M845.8 89.6L850.2 93.9L845.8 98.2" fill="none" stroke="#fff" stroke-width="2"/>
<path d="M919.2 88.1L921.4 90.3L919.2 92.5M923.2 88.1L925.4 90.3L923.2 92.5" fill="none" stroke="#000" stroke-width="1.3"/>
<rect x="913.6" y="106" width="14.6" height="580" fill="#f7f7fb"/><rect x="913.6" y="106" width="1" height="580" fill="#ececf2"/>
<rect x="914.4" y="106.4" width="13.4" height="14" rx="1.6" fill="url(#gSbBtn)" stroke="#c9c9de" stroke-width="0.8"/><path d="M917.4 115.4L921.1 111.5L924.8 115.4" fill="none" stroke="#2a2a32" stroke-width="1.9"/>
<rect x="914.4" y="671.4" width="13.4" height="14" rx="1.6" fill="url(#gSbBtn)" stroke="#c9c9de" stroke-width="0.8"/><path d="M917.4 676.4L921.1 680.3L924.8 676.4" fill="none" stroke="#2a2a32" stroke-width="1.9"/>
<rect x="914.4" y="121.8" width="13.4" height="409.4" rx="1.8" fill="url(#gSb)" stroke="#aeaec6" stroke-width="0.9"/>
<path d="M918.2 323.6H924M918.2 325.4H924M918.2 327.2H924M918.2 329H924" stroke="#9c9cb8" stroke-width="0.8"/><path d="M918.2 324.5H924M918.2 326.3H924M918.2 328.1H924" stroke="#fff" stroke-width="0.8"/>
<rect x="928.2" y="106" width="1.8" height="580" fill="#fdfdfd"/>
<g transform="translate(7.9,691.2)"><g transform="scale(1.0)"><path d="M3.4 0.4H10.8L14 3.6V13.6H3.4Z" fill="#dfeafa" stroke="#6a86d0" stroke-width="0.8"/><path d="M10.8 0.4V3.6H14Z" fill="#8c8c8c" stroke="#555" stroke-width="0.5"/><text x="0.2" y="12" font-family="'Liberation Sans',sans-serif" font-weight="bold" font-size="15.5" fill="#2f74e0" stroke="#2f74e0" stroke-width="0.5">e</text><path d="M1.8 7.2H7.2" stroke="#58a8f8" stroke-width="1.2"/><path d="M-0.2 10.6C0.6 6 4.6 2.4 8.6 2.2" fill="none" stroke="#e8b428" stroke-width="1"/></g></g>
<g transform="translate(796,692.4)"><circle cx="6" cy="6.2" r="5.8" fill="url(#gGlobe)" stroke="#1a2a6a" stroke-width="0.6"/><path d="M2.4 3.6C4 2 6.4 2.2 7.2 3.4C6.2 5 7.6 6.2 6 8C4.6 8.2 4.2 6.2 2.6 5.6Z M8 6.6C9.4 6.4 10.4 7.6 9.6 9.4C8.6 10 7.6 8.6 8 6.6Z" fill="#48c040"/></g>
<rect x="681.9" y="690" width="1" height="16" fill="#f8f4e4"/><rect x="680.9" y="690" width="1" height="16" fill="#c9c9d6"/>
<rect x="703.4" y="690" width="1" height="16" fill="#f8f4e4"/><rect x="702.4" y="690" width="1" height="16" fill="#c9c9d6"/>
<rect x="724.9" y="690" width="1" height="16" fill="#f8f4e4"/><rect x="723.9" y="690" width="1" height="16" fill="#c9c9d6"/>
<rect x="746.4" y="690" width="1" height="16" fill="#f8f4e4"/><rect x="745.4" y="690" width="1" height="16" fill="#c9c9d6"/>
<rect x="767.9" y="690" width="1" height="16" fill="#f8f4e4"/><rect x="766.9" y="690" width="1" height="16" fill="#c9c9d6"/>
<rect x="789.4" y="690" width="1" height="16" fill="#f8f4e4"/><rect x="788.4" y="690" width="1" height="16" fill="#c9c9d6"/>
<rect x="926.2" y="704" width="1.7" height="1.7" fill="#b8b4a0"/><rect x="927" y="704.8" width="1.2" height="1.2" fill="#fff"/>
<rect x="922.6" y="704" width="1.7" height="1.7" fill="#b8b4a0"/><rect x="923.4" y="704.8" width="1.2" height="1.2" fill="#fff"/>
<rect x="919.0" y="704" width="1.7" height="1.7" fill="#b8b4a0"/><rect x="919.8" y="704.8" width="1.2" height="1.2" fill="#fff"/>
<rect x="926.2" y="700.4" width="1.7" height="1.7" fill="#b8b4a0"/><rect x="927" y="701.1999999999999" width="1.2" height="1.2" fill="#fff"/>
<rect x="922.6" y="700.4" width="1.7" height="1.7" fill="#b8b4a0"/><rect x="923.4" y="701.1999999999999" width="1.2" height="1.2" fill="#fff"/>
<rect x="926.2" y="696.8" width="1.7" height="1.7" fill="#b8b4a0"/><rect x="927" y="697.5999999999999" width="1.2" height="1.2" fill="#fff"/>
</svg>
<span class="abs" style="left:25.70px;top:6.00px;font-family:'Liberation Sans',sans-serif;font-size:13px;line-height:17px;color:#000;transform:scaleX(0.8836);transform-origin:0 0;white-space:pre;font-weight:bold;">SHIP2 DD 2 Covers Page 1 - NavalCoverMuseum - Microsoft Internet Explorer</span>
<span class="abs" style="left:14.10px;top:30.00px;font-family:'DejaVu Sans Condensed','DejaVu Sans','Liberation Sans',sans-serif;font-size:10px;line-height:13px;color:#000;letter-spacing:-0.449px;white-space:pre;">File</span>
<span class="abs" style="left:42.90px;top:30.00px;font-family:'DejaVu Sans Condensed','DejaVu Sans','Liberation Sans',sans-serif;font-size:10px;line-height:13px;color:#000;letter-spacing:-0.599px;white-space:pre;">Edit</span>
<span class="abs" style="left:73.90px;top:30.00px;font-family:'DejaVu Sans Condensed','DejaVu Sans','Liberation Sans',sans-serif;font-size:10px;line-height:13px;color:#000;letter-spacing:-0.657px;white-space:pre;">View</span>
<span class="abs" style="left:107.80px;top:30.00px;font-family:'DejaVu Sans Condensed','DejaVu Sans','Liberation Sans',sans-serif;font-size:10px;line-height:13px;color:#000;letter-spacing:-0.082px;white-space:pre;">Favorites</span>
<span class="abs" style="left:164.00px;top:30.00px;font-family:'DejaVu Sans Condensed','DejaVu Sans','Liberation Sans',sans-serif;font-size:10px;line-height:13px;color:#000;letter-spacing:-0.375px;white-space:pre;">Tools</span>
<span class="abs" style="left:199.70px;top:30.00px;font-family:'DejaVu Sans Condensed','DejaVu Sans','Liberation Sans',sans-serif;font-size:10px;line-height:13px;color:#000;letter-spacing:-0.602px;white-space:pre;">Help</span>
<span class="abs" style="left:38.70px;top:59.00px;font-family:'DejaVu Sans Condensed','DejaVu Sans','Liberation Sans',sans-serif;font-size:10px;line-height:13px;color:#000;letter-spacing:-0.810px;white-space:pre;">Back</span>
<span class="abs" style="left:241.90px;top:59.00px;font-family:'DejaVu Sans Condensed','DejaVu Sans','Liberation Sans',sans-serif;font-size:10px;line-height:13px;color:#000;letter-spacing:-0.097px;white-space:pre;">Search</span>
<span class="abs" style="left:306.90px;top:59.00px;font-family:'DejaVu Sans Condensed','DejaVu Sans','Liberation Sans',sans-serif;font-size:10px;line-height:13px;color:#000;letter-spacing:-0.082px;white-space:pre;">Favorites</span>
<span class="abs" style="left:11.00px;top:88.00px;font-family:'DejaVu Sans Condensed','DejaVu Sans','Liberation Sans',sans-serif;font-size:10px;line-height:13px;color:#7f7f7f;letter-spacing:-0.184px;white-space:pre;">Address</span>
<span class="abs" style="left:70.30px;top:88.00px;font-family:'DejaVu Sans Condensed','DejaVu Sans','Liberation Sans',sans-serif;font-size:10px;line-height:13px;color:#000;letter-spacing:-0.065px;white-space:pre;">http://www.navalcovermuseum.org/wiki/index.php?title=SHIP2_DD_2_Covers_Page_1</span>
<span class="abs" style="left:857.80px;top:88.00px;font-family:'DejaVu Sans Condensed','DejaVu Sans','Liberation Sans',sans-serif;font-size:10px;line-height:13px;color:#000;letter-spacing:-1.473px;white-space:pre;">Go</span>
<span class="abs" style="left:889.80px;top:88.00px;font-family:'DejaVu Sans Condensed','DejaVu Sans','Liberation Sans',sans-serif;font-size:10px;line-height:13px;color:#7f7f7f;letter-spacing:-0.681px;white-space:pre;">Links</span>
<span class="abs" style="left:812.50px;top:692.00px;font-family:'DejaVu Sans Condensed','DejaVu Sans','Liberation Sans',sans-serif;font-size:10px;line-height:13px;color:#000;letter-spacing:-0.097px;white-space:pre;">Internet</span>
</div>
</body>
</html>
